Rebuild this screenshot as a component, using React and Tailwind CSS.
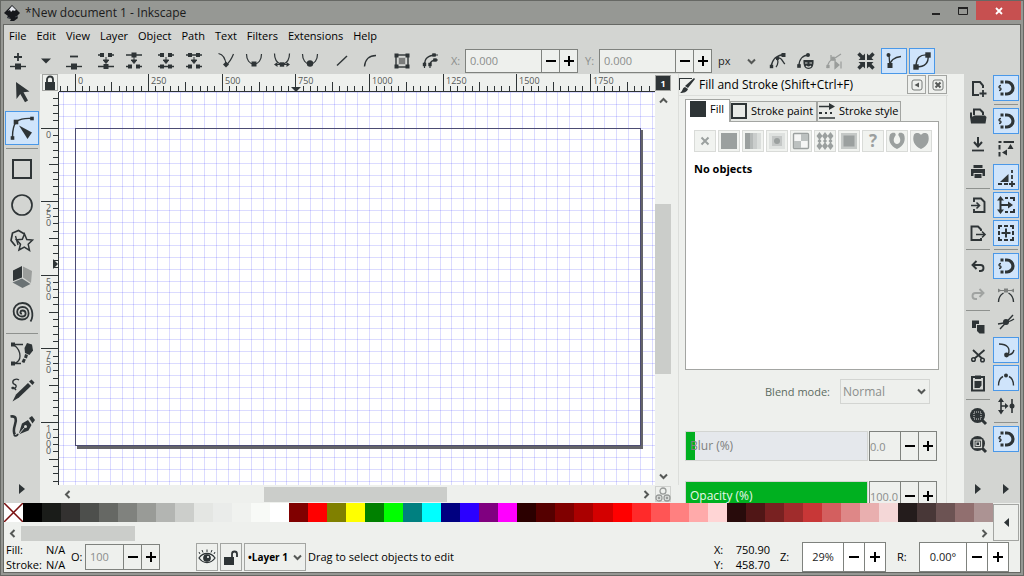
import React from "react";

const INK = "#2e3436";

function Icon({ size = 24, children, className = "" }) {
  return (
    <svg
      width={size}
      height={size}
      viewBox={`0 0 ${size} ${size}`}
      fill="none"
      stroke={INK}
      strokeWidth="1.4"
      className={`shrink-0 ${className}`}
      aria-hidden="true"
    >
      {children}
    </svg>
  );
}

function Sq({ x, y, r = 2, fill = INK }) {
  return <rect x={x - r} y={y - r} width={r * 2} height={r * 2} fill={fill} stroke="none" />;
}

function Dot({ x, y, r = 3, fill = INK }) {
  return <circle cx={x} cy={y} r={r} fill={fill} stroke="none" />;
}

const DownArrow = <path d="M12 8v4M9.2 11h5.6L12 14.5z" fill={INK} strokeWidth="1" />;
const Bowl = <path d="M4.5 5c0 6 3 10 7.5 10s7.5-4 7.5-10" strokeWidth="1.2" />;

/* ---------- node toolbar icons ---------- */
const nodeGroups = [
  [
    ["Insert node", <><path d="M12 4v8M8 8h8" strokeWidth="1.8" /><path d="M4 17.5h16" /><Sq x={12} y={17.5} r={3} /></>],
    ["Insert node options", <path d="M7 9.500h10l-5 5z" fill={INK} stroke="none" />],
    ["Delete node", <><path d="M8 7.5h8" strokeWidth="1.8" /><path d="M4 17.5h16" /><Sq x={12} y={17.5} r={3} /></>],
  ],
  [
    ["Join nodes", <><path d="M4 6h5M15 6h5M4 17.5h16" /><Sq x={8} y={6} /><Sq x={16} y={6} />{DownArrow}<Sq x={12} y={17.5} r={2.5} /></>],
    ["Break path", <><path d="M4 6h16M4 17.5h5M15 17.5h5" /><Sq x={12} y={6} r={2.5} />{DownArrow}<Sq x={8} y={17.5} /><Sq x={16} y={17.5} /></>],
  ],
  [
    ["Join with segment", <><path d="M4 6h5M15 6h5M4 17.5h16" /><Sq x={8} y={6} /><Sq x={16} y={6} />{DownArrow}<Sq x={8} y={17.5} /><Sq x={16} y={17.5} /></>],
    ["Delete segment", <><path d="M4 6h16M4 17.5h5M15 17.5h5" /><Sq x={8} y={6} /><Sq x={16} y={6} />{DownArrow}<Sq x={8} y={17.5} /><Sq x={16} y={17.5} /></>],
  ],
  [
    ["Corner node", <><path d="M4.5 4.5c5 1 7 5 7.500 11.500 3-2 5.500-6 7.500-11" strokeWidth="1.2" /><path d="M12 12.500l3 3-3 3-3-3z" fill={INK} stroke="none" /></>],
    ["Smooth node", <>{Bowl}<Sq x={12} y={15} r={2.5} /></>],
    ["Symmetric node", <><path d="M4.5 4.5c0 5 2 9 6 10.500M19.5 4.5c0 5-2 9-6 10.500" strokeWidth="1.2" /><Sq x={12} y={15.5} r={2.2} /><path d="M4 15.500l3.500-2.500v5zM20 15.500l-3.500-2.500v5z" fill={INK} stroke="none" /><path d="M5 15.500h14" strokeWidth="1" /></>],
    ["Auto-smooth node", <>{Bowl}<Dot x={12} y={14.5} r={3.2} /></>],
  ],
  [
    ["Line segment", <path d="M7 16.500L17 7" />],
    ["Curve segment", <path d="M6.500 17.500C7 11 11 6.500 18 6.500" />],
  ],
  [
    ["Object to path", <><rect x="6" y="6" width="12" height="12" /><Sq x={6.5} y={6.5} /><Sq x={17.5} y={6.5} /><Sq x={6.5} y={17.5} /><Sq x={17.5} y={17.5} /><Sq x={12} y={12} r={3.2} fill="#7b7d7c" /></>],
    ["Stroke to path", <><path d="M7 16c-1-6 3-10 11-10M12 16c0-3 2-5 7-5" /><Sq x={16} y={6} r={1.7} /><Sq x={17} y={11} r={1.7} /><Sq x={6.5} y={15.5} r={1.7} /><Sq x={12} y={15.5} r={1.7} /><path d="M6.500 13v6M12 14v5M14 6h6M15 11h5" strokeWidth="1.2" /></>],
  ],
];

const pathEffectIcons = [
  ["Edit path effect", <><path d="M5 18C6 11 10 6 19 5.500M12 9c4-1 5 5 7 6M10 10c3 0 2 6 0 8" strokeWidth="1.3" /><Sq x={17.5} y={6} r={2} /><Dot x={11.5} y={9.5} r={1.8} /><Sq x={5.500} y={17.5} r={1.7} /></>],
  ["Edit mask", <><path d="M5 17C5 10 9 6 15 6" /><Sq x={5} y={17} r={1.8} /><Dot x={14} y={6} r={2} /><path d="M9.500 11h10c.5 5-1 9-5 9s-5.500-4-5-9z" fill={INK} stroke="none" /><path d="M11 14h2.500M15.500 14H18M12 17c1.500 1.500 3.500 1.500 5 0" stroke="#d3d5d2" strokeWidth="1.2" /></>],
];

const disabledEffect = (
  <g stroke="#9a9d9b">
    <path d="M5 19c1-5 3-8 6-9M10 11l9-6M9 6v5h5" strokeWidth="1.3" />
    <Sq x={6} y={17.5} r={1.6} fill="#9a9d9b" />
    <Sq x={11} y={9.5} r={1.8} fill="#9a9d9b" />
    <path d="M13 12.500v7l4-3.500zM19 12.500v7" fill="#9a9d9b" strokeWidth="1.2" />
  </g>
);

const transformHandles = (
  <>
    <path d="M4.500 4.500l4 4M19.500 4.500l-4 4M4.500 19.500l4-4M19.500 19.500l-4-4" strokeWidth="3.4" />
    <path d="M11 11V4.500L4.500 11zM13 11V4.500l6.500 6.500zM11 13v6.500L4.500 13zM13 13v6.500l6.500-6.500z" fill={INK} stroke="none" />
  </>
);

const handlesIcon = (
  <><path d="M8 17c0-5 4-9 11-9.500M7 6l1 12" strokeWidth="1.3" /><Sq x={8} y={16.5} r={2.5} /><Dot x={6.5} y={6} r={2} /></>
);
const outlineIcon = (
  <><path d="M6 18C6 9 10 5 18 6c1 8-3 12-12 12z" /><Sq x={6} y={18} r={2.7} /><Sq x={18} y={6} r={2.7} /></>
);

/* ---------- toolbox ---------- */
const tools = [
  ["Selector", <path d="M12 8l13.500 9.500-6 .7 4.500 8.300-3 1.800-4.700-8.200L12.500 25z" fill={INK} stroke="none" />],
  ["Node tool", <><path d="M8.500 27c0-8 1-12 4-15.500C16 9 20 8 28 8.500" /><Sq x={12} y={12} r={2.3} /><Sq x={28} y={8.5} r={1.8} /><Sq x={8.5} y={28} r={1.8} /><path d="M15 15.500l13 7-4.500 6.500z" fill={INK} stroke="none" /></>],
  "sep",
  ["Rectangle", <rect x="9" y="9" width="18" height="18" strokeWidth="2" />],
  ["Ellipse", <circle cx="18" cy="18" r="10" strokeWidth="1.7" />],
  ["Star", <><path d="M11.500 23L7 17.500 8.500 10l6-2.500 6 3.500" strokeWidth="1.7" /><path d="M14 22l-2.500-9" strokeWidth="1.3" /><path d="M20.500 11l2.300 5.500 5.700.5-4.300 4.300 1.300 6-5.200-3.300-5.300 3 1.500-5.700-4-4.500 5.800-.5z" strokeWidth="1.5" fill="#d3d5d2" /></>],
  ["3D box", <g stroke="none"><path d="M9 11.500L18 7v11.500L9 22z" fill={INK} /><path d="M19 7.500l9 4.500-1 12-8-5.500z" fill="#9b9e9c" /><path d="M8.500 23.500l9.500-4 8.500 5.500-8 4z" fill="#6a7274" /></g>],
  ["Spiral", <path d="M18 18.500c-2.500.5-2-3 .5-3 4 0 4.500 6-.5 6-6.500 0-6.500-9.500.5-9.500 8 0 8.500 12.500-.5 12.500C6.500 24.500 7 8 18.500 8 29 8 30 21 26.500 26.500" strokeWidth="1.8" />],
  "sep",
  ["Bezier pen", <><path d="M9 8.500h10M9 27.500h8M10 9c4 3 6 7 6 11s-2 6-5 7" strokeWidth="1.3" /><Sq x={9} y={8.5} /><Sq x={9} y={27.5} /><path d="M23 7l5 1.500 1 6-3.500 4.500-4.500-2-.5-5z" fill={INK} stroke="none" /><path d="M22.500 18.500l-1 3.500M20.500 23l-1.500 3.500" strokeWidth="3" /></>],
  ["Pencil", <><path d="M15 8c-3-2-7 0-6 3 .5 2 4 1 3 4-1 2-4 2-4 1s2-1 4 2" strokeWidth="1.4" /><path d="M24 11l3 3-12 11.500-6.500 4 3.500-7z" fill={INK} stroke="none" /><path d="M25 9.500l2.500-2 3 3-2 2.500z" fill={INK} stroke="none" /></>],
  ["Calligraphy", <><path d="M6.500 8.500c6-1 6 3 4.500 8s-2 8 0 10" strokeWidth="2.6" /><path d="M10 27c1 1.500 3 1 4-1" strokeWidth="1.8" /><path d="M14.500 26.500l3.500-11 6-3.500 3.500 5-3 5.500z" fill={INK} stroke="none" /><path d="M15 26l5.500-6.500" stroke="#d3d5d2" strokeWidth="1" /><circle cx="21.5" cy="18.5" r="1.5" fill="#d3d5d2" stroke="none" /><path d="M25 10l3-2 3 4-2.500 3.500z" fill={INK} stroke="none" /></>],
];

/* ---------- command bar ---------- */
const commands = [
  ["New", <><path d="M17 12V9.500L14 6H7v13h6" strokeWidth="2" /><path d="M17 14v7M13.500 17.500h7" strokeWidth="1.8" /></>],
  ["Open", <><path d="M8 11V5.500h6l3 3V11" strokeWidth="2" /><path d="M5 8.500v5" strokeWidth="2" /><path d="M4 12.500h3l1-1h11l1.500 1.500-1 6.500H5z" fill={INK} stroke="none" /></>],
  ["Save", <><path d="M12 5v9" strokeWidth="2" /><path d="M8 10l4 4.500 4-4.500" strokeWidth="2" /><path d="M6 18.500h12" strokeWidth="1.8" /></>],
  ["Print", <g fill={INK} stroke="none"><path d="M7.500 5h9v3h-9zM5 9h14v7h-2.500v-3h-9v3H5z" /><path d="M8.500 14h7v4h-7z" /></g>],
  "sep",
  ["Import", <><path d="M8 9V5.500h7L18.500 9v10H8v-3" strokeWidth="1.9" /><path d="M5 12.500h8M10.500 9.500l3 3-3 3" strokeWidth="1.6" /></>],
  ["Export", <><path d="M15 10V8.500L12 5.500H5.500V19H15v-2" strokeWidth="1.9" /><path d="M10 13.500h9M16 10.500l3 3-3 3" strokeWidth="1.6" /></>],
  "sep",
  ["Undo", <><path d="M7.500 11h7c4 0 4 6 0 6H13" strokeWidth="1.9" /><path d="M10.500 7L6.500 11l4 4" strokeWidth="1.9" /></>],
  ["Redo", <g stroke="#a0a3a1"><path d="M16.500 11h-7c-4 0-4 6 0 6H11" strokeWidth="1.9" /><path d="M13.500 7l4 4-4 4" strokeWidth="1.9" /></g>],
  "sep",
  ["Duplicate", <g fill={INK} stroke="none"><path d="M6 5.500h7V9h-3v4H6z" /><path d="M11 10h7.500v8.500h-5L11 16z" /></g>],
  ["Cut", <><path d="M7 7l9 8.500M18.500 7l-10 8.500" strokeWidth="1.8" /><circle cx="7.5" cy="16.5" r="1.8" strokeWidth="1.5" /><circle cx="16.5" cy="17" r="1.8" strokeWidth="1.5" /></>],
  ["Paste", <><rect x="6" y="6" width="12" height="13.5" strokeWidth="2" /><path d="M9 4.500h6V8H9zM8.500 10h7v4.500l-2 2.500h-5z" fill={INK} stroke="none" /></>],
  "sep",
  ["Zoom selection", <><circle cx="11.5" cy="11.5" r="7.5" fill={INK} stroke="none" /><path d="M16 16l4 4" strokeWidth="3" /><rect x="8" y="8" width="7" height="7" stroke="#d3d5d2" strokeWidth="1" strokeDasharray="1 1" /></>],
  ["Zoom drawing", <><circle cx="11.5" cy="11.5" r="7.5" fill={INK} stroke="none" /><path d="M16 16l4 4" strokeWidth="3" /><rect x="8" y="8" width="7.5" height="7.5" stroke="#d3d5d2" strokeWidth="1.3" /><rect x="10" y="10" width="3.5" height="3.5" stroke="#d3d5d2" strokeWidth="1" /></>],
];

/* ---------- snap bar ---------- */
const Magnet = (
  <>
    <path d="M11 6h2a6 6 0 0 1 0 12h-2" strokeWidth="3.2" />
    <Sq x={8} y={6} r={1.5} />
    <Sq x={8} y={18} r={1.5} />
    <path d="M7 9.500c-2.500 0-2.500 2.500-1 2.500s1.500 2.500-1 2.500" strokeWidth="1.3" />
  </>
);
const snaps = [
  ["Enable snapping", Magnet, true],
  "sep",
  ["Snap bounding boxes", Magnet, true],
  ["Snap bounding box edges", <><path d="M4.500 5h3M9.500 5H20M5.500 8v4.500M5.500 15v4.500" strokeWidth="2" /><path d="M16.500 7l3 5h-6zM8 15.500l5-3v6z" fill={INK} stroke="none" /></>, false],
  ["Snap bounding box corners", <><path d="M14.500 6v11H6l8.500-8z" fill={INK} stroke="none" /><path d="M18 5v3M18 10v4M4 19h4M10 19h4M15 19h6M18 16v6" strokeWidth="1.8" /></>, true],
  ["Snap edge midpoints", <><path d="M6.500 5v14M6.500 12h9" strokeWidth="2" /><path d="M6.500 3L10 7.500H3zM6.500 21l3.500-4.500H3zM19 12l-5-3.500v7z" fill={INK} stroke="none" /><path d="M11 5h3M16 5h4v3M20 16v3h-4M14 19h-3" strokeWidth="2" /></>, true],
  ["Snap bounding box centers", <><path d="M12 7.500v9M7.500 12h9" strokeWidth="2" /><path d="M5 8V5h3M10 5h4M16 5h3v3M19 10v4M19 16v3h-3M14 19h-4M8 19H5v-3M5 14v-4" strokeWidth="2" /></>, true],
  "sep",
  ["Snap nodes", Magnet, true],
  ["Snap to paths", <><path d="M4.500 20c0-5 1.500-7 5-9M19.500 20c0-5-1.500-7-5-9" /><g stroke="#7d807e" fill="#7d807e"><path d="M5 8.500h14" strokeWidth="1" /><rect x="10" y="6.500" width="4" height="4" stroke="none" /><path d="M4 6.500l3.500 2-3.500 2zM20 6.500l-3.500 2 3.500 2z" stroke="none" /></g></>, false],
  ["Snap path intersections", <><path d="M4 14c5-1 10-1 16-5M6 19L19 5" /><Dot x={12} y={12} /></>, false],
  ["Snap cusp nodes", <><path d="M5 6c8 0 12 4 9 11M13 17c4 0 6-1 7-5" strokeWidth="1.4" /><Dot x={12.5} y={17} r={2.4} /></>, true],
  ["Snap smooth nodes", <><path d="M4.500 19.500c0-5 1.500-7.500 4.500-9M19.500 19.500c0-5-1.500-7.500-4.500-9" /><Dot x={12} y={9.5} r={2} /></>, true],
  ["Snap line midpoints", <><path d="M7 6v12M7 12h6M18 5v14" strokeWidth="1.6" /><path d="M7 3.500l3 4.500H4zM7 20.500l3-4.500H4zM14.500 12L11 9v6z" fill={INK} stroke="none" /><Dot x={18} y={12} r={2.5} /></>, false],
  "sep",
  ["Snap others", Magnet, true],
];

const swatches = [
  "bg-[#000000]", "bg-[#1a1c19]", "bg-[#333130]", "bg-[#4d4f4c]", "bg-[#666864]", "bg-[#80827e]", "bg-[#999b97]",
  "bg-[#b3b5b2]", "bg-[#cccecb]", "bg-[#e4e6e3]", "bg-[#eaecea]", "bg-[#f0f2ef]", "bg-[#f8faf7]", "bg-[#ffffff]",
  "bg-[#800000]", "bg-[#ff0000]", "bg-[#808000]", "bg-[#ffff00]", "bg-[#008000]", "bg-[#00ff00]", "bg-[#008080]",
  "bg-[#00ffff]", "bg-[#000080]", "bg-[#2b00ff]", "bg-[#800080]", "bg-[#ff00ff]", "bg-[#2b0000]", "bg-[#550000]",
  "bg-[#800000]", "bg-[#aa0000]", "bg-[#d40000]", "bg-[#ff0000]", "bg-[#ff2a2a]", "bg-[#ff5555]", "bg-[#ff8080]",
  "bg-[#ffaaaa]", "bg-[#ffd5d5]", "bg-[#280b0b]", "bg-[#501616]", "bg-[#782121]", "bg-[#a02c2c]", "bg-[#c83737]",
  "bg-[#d35f5f]", "bg-[#de8787]", "bg-[#e9afaf]", "bg-[#f4d7d7]", "bg-[#241c1c]", "bg-[#483737]", "bg-[#6c5353]",
  "bg-[#916f6f]", "bg-[#ac9393]",
];

/* ---------- small controls ---------- */
function Chevron({ dir = "down", size = 9 }) {
  const d = { down: "M1 2.500l3.500 3.500L8 2.500", up: "M1 6.500L4.500 3 8 6.500", left: "M6.500 1L3 4.500 6.500 8", right: "M2.500 1L6 4.500 2.500 8" }[dir];
  return (
    <svg width={size} height={size} viewBox="0 0 9 9" fill="none" stroke="#555856" strokeWidth="2" className="shrink-0" aria-hidden="true">
      <path d={d} />
    </svg>
  );
}

function Spin({ label, value, entry, button = "w-[18px]", height = "h-6", tone = "bg-[#eef0ed] text-[#8b8e8c]" }) {
  return (
    <div className={`flex shrink-0 border border-[#7f827e] ${height} ${tone}`}>
      <input aria-label={label} defaultValue={value} className={`h-full min-w-0 bg-transparent outline-none ${entry}`} />
      <button aria-label={`Decrease ${label}`} className={`flex items-center justify-center border-l border-[#7f827e] ${button}`}>
        <svg width="12" height="12" viewBox="0 0 12 12" aria-hidden="true"><path d="M1 6h10" stroke="#000" strokeWidth="2" /></svg>
      </button>
      <button aria-label={`Increase ${label}`} className={`flex items-center justify-center border-l border-[#7f827e] ${button}`}>
        <svg width="12" height="12" viewBox="0 0 12 12" aria-hidden="true"><path d="M1 6h10M6 1v10" stroke="#000" strokeWidth="2" /></svg>
      </button>
    </div>
  );
}

function ToolButton({ label, active, children, size = "size-7", inner = "size-[26px]" }) {
  return (
    <button aria-label={label} title={label} className={`flex shrink-0 items-center justify-center ${size}`}>
      <span className={`flex items-center justify-center ${inner} ${active ? "border border-[#4a98e8] bg-[#cfe4fb]" : ""}`}>{children}</span>
    </button>
  );
}

function Separator() {
  return <div className="mx-0.5 my-0.5 h-px shrink-0 self-stretch bg-[#8e918e]" />;
}

function MoreButton() {
  return (
    <button aria-label="More" className="mt-auto flex h-7 items-center justify-center self-center">
      <svg width="6" height="10" viewBox="0 0 6 10" aria-hidden="true"><path d="M0 0l6 5-6 5z" fill={INK} /></svg>
    </button>
  );
}

/* ---------- drawing canvas ---------- */
const ZOOM = 0.2944;
const range = (from, to) => Array.from({ length: to - from + 1 }, (_, i) => i + from);

function HorizontalRuler() {
  const origin = 16;
  return (
    <svg className="block h-[18px] min-w-0 flex-1" aria-label="Horizontal ruler">
      {range(-2, 400).map((n) => {
        const x = Math.floor(origin + n * 25 * ZOOM) + 0.5;
        const h = n % 10 === 0 ? 17 : n % 5 === 0 ? 9 : 5;
        return <path key={n} d={`M${x} ${17 - h}V17`} stroke={INK} />;
      })}
      {range(0, 7).map((n) => (
        <text key={n} x={Math.floor(origin + n * 250 * ZOOM) + 3} y="10" fontSize="9" fill="#555856">{n * 250}</text>
      ))}
      <path d="M0 17.500H4000" stroke={INK} />
      <path d="M232 13h10l-5 5z" fill={INK} />
    </svg>
  );
}

function VerticalRuler() {
  const origin = 36;
  return (
    <svg className="block w-[19px] shrink-0" aria-label="Vertical ruler">
      {range(-4, 300).map((n) => {
        const y = Math.floor(origin + n * 25 * ZOOM) + 0.5;
        const w = n % 10 === 0 ? 17 : n % 5 === 0 ? 9 : 5;
        return <path key={n} d={`M${18 - w} ${y}H18`} stroke={INK} />;
      })}
      {range(0, 4).map((n) =>
        String(n * 250).split("").map((c, i) => (
          <text key={`${n}-${i}`} x="6" y={Math.floor(origin + n * 250 * ZOOM) + 10 + Math.floor(i * 7.6)} fontSize="9" fill="#555856">{c}</text>
        ))
      )}
      <path d="M18.500 0V3000" stroke={INK} />
      <path d="M13 167v10l5-5z" fill={INK} />
    </svg>
  );
}

function Canvas() {
  return (
    <svg className="block h-full min-w-0 flex-1 bg-white" role="img" aria-label="Drawing canvas">
      {range(-1, 250).map((n) => (
        <path key={`v${n}`} d={`M${Math.floor(16 + n * 40 * ZOOM) + 0.5} 0V3000`} stroke="#0000ff" strokeOpacity="0.14" />
      ))}
      {range(-3, 200).map((n) => (
        <path key={`h${n}`} d={`M0 ${Math.floor(36 + n * 40 * ZOOM) + 0.5}H4000`} stroke="#0000ff" strokeOpacity="0.14" />
      ))}
      <path d="M581 38h3v319H18v-4h563z" fill="#646469" />
      <rect x="16.5" y="36.5" width="565" height="317" fill="none" stroke="#4c4c73" />
    </svg>
  );
}

function Workspace() {
  return (
    <div className="flex min-w-0 flex-1 flex-col bg-[#eef0ed]">
      <div className="flex min-h-0 flex-1">
        <div className="flex min-w-0 flex-1 flex-col">
          <div className="flex h-[18px] shrink-0">
            <div className="flex w-[19px] shrink-0 justify-center">
              <button aria-label="Lock guides" className="flex h-[17px] w-4 items-center justify-center border border-[#a3a5a2]">
                <svg width="12" height="15" viewBox="0 0 12 15" aria-hidden="true">
                  <path d="M3 8V4.500a3 3 0 0 1 6 0V8" fill="none" stroke={INK} strokeWidth="1.8" />
                  <path d="M1 7h10v8H1z" fill={INK} />
                </svg>
              </button>
            </div>
            <HorizontalRuler />
          </div>
          <div className="flex min-h-0 flex-1">
            <VerticalRuler />
            <Canvas />
          </div>
        </div>
        <div className="flex w-4 shrink-0 flex-col items-center">
          <button aria-label="Color management" className="mt-px flex size-4 shrink-0 items-center justify-center border border-[#a3a5a2] bg-[#2e3436] text-[9px] leading-none font-bold text-white">1</button>
          <button aria-label="Scroll up" className="flex h-[19px] shrink-0 items-center"><Chevron dir="up" /></button>
          <div className="flex w-full flex-1 flex-col pt-[94px]">
            <div className="h-[170px] bg-[#cbcdca]" />
          </div>
          <button aria-label="Scroll down" className="flex h-[18px] shrink-0 items-center"><Chevron /></button>
        </div>
        <div className="w-2 shrink-0 border-r border-[#dcdedb]" />
      </div>
      <div className="flex h-[18px] shrink-0 items-center">
        <button aria-label="Scroll left" className="ml-5 flex w-3.5 shrink-0 justify-center"><Chevron dir="left" /></button>
        <div className="flex h-[15px] min-w-0 flex-1 pl-0.5">
          <div className="w-1/3" />
          <div className="h-full w-[183px] bg-[#cbcdca]" />
        </div>
        <button aria-label="Scroll right" className="flex w-3.5 shrink-0 justify-center"><Chevron dir="right" /></button>
        <button aria-label="Sticky zoom" className="mr-2 ml-0.5 flex size-4 shrink-0 items-center justify-center border border-[#d0d2cf]">
          <svg width="16" height="15" viewBox="0 0 16 15" fill="none" stroke="#989b99" strokeWidth="1.3" className="shrink-0" aria-hidden="true">
            <circle cx="8" cy="4" r="3" /><circle cx="4" cy="11" r="3" /><circle cx="12" cy="11" r="3" />
            <circle cx="4" cy="11" r=".8" /><circle cx="12" cy="11" r=".8" />
          </svg>
        </button>
      </div>
    </div>
  );
}

/* ---------- fill and stroke dialog ---------- */
const G = "#9ba09f";
const paints = [
  ["No paint", <path d="M5.500 5.500l7 7M12.500 5.500l-7 7" stroke={G} strokeWidth="2" />],
  ["Flat color", <rect x="1" y="1" width="16" height="16" fill={G} stroke="none" />],
  ["Linear gradient", <g stroke="none" fill={G}><path d="M1 1h5v16H1z" /><path d="M6 1h3v16H6z" opacity=".7" /><path d="M9 1h4v16H9z" opacity=".45" /><path d="M13 1h4v16h-4z" opacity=".25" /></g>],
  ["Radial gradient", <g stroke="none" fill={G}><path d="M1 1h16v16H1z" opacity=".2" /><path d="M4 4h10v10H4z" opacity=".4" /><circle cx="9" cy="9" r="3" /></g>],
  ["Mesh gradient", <g><rect x="1.5" y="1.5" width="15" height="15" rx="1" stroke={G} fill="#f5f6f5" /><path d="M9 2h7v7H9zM2 9h7v7H2z" fill="#bcc1c0" stroke="none" /></g>],
  ["Pattern", <g stroke="none" fill={G}>{[3.5, 9, 14.5].map((x) => <path key={x} d={`M${x} 0l3 4-3 4-3-4zM${x} 10l3 4-3 4-3-4zM${x - 2} 9l2-2.500 2 2.500-2 2.500z`} />)}</g>],
  ["Swatch", <g stroke="none"><rect x="1" y="1" width="16" height="16" fill="#c5c9c7" /><rect x="3.5" y="3.5" width="11" height="11" fill={G} /></g>],
  ["Unset paint", <text x="9" y="15" textAnchor="middle" fontSize="17" fontWeight="700" fill={G} stroke="none">?</text>],
  ["Fill rule even-odd", <path d="M7 1C5 .5 3 1 2 2.500 0 8 2 14 9 17c7-3 9-9 7-14.500C15 1 13 .5 11 1c-.5 1-1 1.500-.5 2.500 3 4 2 8-1.500 8.500-3.500-.5-4.500-4.500-1.500-8.500C8 2.500 7.500 2 7 1z" fill={G} stroke="none" />],
  ["Fill rule nonzero", <path d="M9 3c2-2.500 5-2.500 7-.5 2 5.500 0 11.500-7 14.500C2 14 0 8 2 2.500 4 .5 7 .5 9 3z" fill={G} stroke="none" />],
];

function Meter({ label, value, fill, text, track }) {
  return (
    <div className="flex h-[30px] shrink-0 gap-px">
      <div className={`relative flex min-w-0 flex-1 items-center border border-[#d3d5d2] ${track}`}>
        <div className={`absolute inset-y-0 left-0 bg-[#00b020] ${fill}`} />
        <span className={`relative pl-1 text-[12px] ${text}`}>{label}</span>
        <input type="range" aria-label={label} defaultValue={value} className="absolute inset-0 size-full opacity-0" />
      </div>
      <Spin label={`${label} value`} value={value} entry="w-[30px]" height="h-[30px]" />
    </div>
  );
}

function FillStrokePanel() {
  return (
    <section className="flex w-[285px] shrink-0 bg-[#eef0ed]">
      <div className="flex min-w-0 flex-1 flex-col overflow-hidden">
        <header className="flex h-[22px] shrink-0 items-center border-b border-[#dcdedb]">
          <svg width="16" height="18" viewBox="0 0 16 18" aria-hidden="true">
            <path d="M0 2.500h13M.5 2.500V14" stroke={INK} fill="none" />
            <path d="M15 2l1 1-7 9-3-2zM6 11l3 2c-1 3-4 4-8 4 3-2 2-5 5-6z" fill={INK} />
          </svg>
          <h2 className="ml-1 flex-1 text-[12px] text-black">Fill and Stroke (Shift+Ctrl+F)</h2>
          <button aria-label="Iconify dialog" className="mr-0.5 flex size-[19px] items-center justify-center border border-[#a3a5a2]">
            <svg width="12" height="12" viewBox="0 0 12 12" fill="none" stroke="#777a78" aria-hidden="true"><rect x="1" y="1" width="10" height="10" rx="2" /><path d="M3.500 6L8 3.500v5z" fill="#555856" stroke="none" /></svg>
          </button>
          <button aria-label="Close dialog" className="mr-px flex size-[19px] items-center justify-center border border-[#a3a5a2]">
            <svg width="12" height="12" viewBox="0 0 12 12" fill="none" stroke="#777a78" aria-hidden="true"><rect x="1" y="1" width="10" height="10" rx="2" /><path d="M3.500 3.500l5 5M8.500 3.500l-5 5" stroke="#555856" strokeWidth="2" /></svg>
          </button>
        </header>
        <div className="mr-px flex flex-1 flex-col border-r border-[#dcdedb] pt-[3px] pr-[7px] pl-1.5">
          <div role="tablist" className="flex h-[22px] items-end whitespace-nowrap text-black">
            <button role="tab" aria-selected="true" className="relative z-10 -mb-px flex h-[23px] w-[45px] items-center gap-1 border border-b-0 border-[#a3a5a2] bg-white pb-1 pl-1">
              <span className="size-4 shrink-0 bg-[#2e3436]" />Fill
            </button>
            <button role="tab" aria-selected="false" className="flex h-5 w-[87px] items-center gap-1 border border-b-0 border-[#a3a5a2] bg-[#e8eae7] pb-0.5">
              <span className="size-4 shrink-0 border-2 border-[#2e3436]" />Stroke paint
            </button>
            <button role="tab" aria-selected="false" className="flex h-5 w-[84px] items-center gap-1 border border-b-0 border-[#a3a5a2] bg-[#e8eae7] pb-0.5 pl-px">
              <svg width="16" height="16" viewBox="0 0 16 16" className="shrink-0" stroke={INK} fill="none" aria-hidden="true">
                <path d="M0 3.500h12M0 15h16" strokeWidth="1.5" /><path d="M10 0l6 3.500L10 7z" fill={INK} stroke="none" /><path d="M0 10h3M6 10h2M11 10h2" strokeWidth="2" />
              </svg>
              Stroke style
            </button>
          </div>
          <div className="flex h-[249px] shrink-0 flex-col border border-[#a3a5a2] bg-white pt-2 pl-2">
            <div className="flex gap-0.5">
              {paints.map(([label, art]) => (
                <button key={label} aria-label={label} className="flex size-[22px] shrink-0 items-center justify-center border border-[#d9dbd8] bg-[#f1f3f0]">
                  <Icon size={18}>{art}</Icon>
                </button>
              ))}
            </div>
            <p className="mt-[9px] font-bold text-black">No objects</p>
          </div>
          <div className="mt-[9px] flex h-[25px] shrink-0 items-center justify-end gap-2.5 pr-[9px]">
            <label htmlFor="blend" className="text-[#5c6b5f]">Blend mode:</label>
            <div className="relative h-full">
              <select id="blend" defaultValue="Normal" className="h-full w-[90px] appearance-none border border-[#d3d5d2] bg-[#eef0ed] pl-0.5 text-[12px] text-[#8b8e8c]">
                <option>Normal</option>
              </select>
              <span className="pointer-events-none absolute top-2 right-1"><Chevron /></span>
            </div>
          </div>
          <div className="mt-[27px] flex flex-col gap-5 pr-0.5">
            <Meter label="Blur (%)" value="0.0" fill="w-[9px]" text="text-[#7d807e]" track="bg-[#e5e8ec]" />
            <Meter label="Opacity (%)" value="100.0" fill="w-full" text="text-[#e8f8ea]" track="bg-[#00b020]" />
          </div>
        </div>
      </div>
      <div className="w-4 shrink-0" />
    </section>
  );
}

function TopBar() {
  return (
    <div className="flex h-[27px] shrink-0 items-center">
      <div className="flex gap-1">
        {nodeGroups.map((group, i) => (
          <div key={i} className="flex">
            {group.map(([label, art]) => <ToolButton key={label} label={label}><Icon>{art}</Icon></ToolButton>)}
          </div>
        ))}
      </div>
      <label className="ml-[7px] flex items-center text-[#8b8e8c]"><span className="w-3.5">X:</span><Spin label="X" value="0.000" entry="w-[75px] pl-1" /></label>
      <label className="ml-[7px] flex items-center text-[#8b8e8c]"><span className="w-3.5">Y:</span><Spin label="Y" value="0.000" entry="w-[75px] pl-1" /></label>
      <div className="relative ml-1.5">
        <select aria-label="Units" defaultValue="px" className="h-6 w-[42px] appearance-none bg-transparent text-[#222]"><option>px</option></select>
        <span className="pointer-events-none absolute top-2 right-1"><Chevron /></span>
      </div>
      <div className="ml-1 flex">
        {pathEffectIcons.map(([label, art]) => <ToolButton key={label} label={label}><Icon>{art}</Icon></ToolButton>)}
        <ToolButton label="Next path effect parameter"><Icon>{disabledEffect}</Icon></ToolButton>
      </div>
      <div className="ml-1 flex">
        <ToolButton label="Show transform handles"><Icon>{transformHandles}</Icon></ToolButton>
        <ToolButton label="Show Bezier handles" active><Icon>{handlesIcon}</Icon></ToolButton>
        <ToolButton label="Show path outline" active><Icon>{outlineIcon}</Icon></ToolButton>
      </div>
    </div>
  );
}

function StatusBar() {
  const white = "bg-white text-[#222]";
  return (
    <footer className="flex h-[31px] shrink-0 items-center overflow-hidden pl-0.5 text-black">
      <div className="grid w-[63px] grid-cols-[40px_auto] leading-[15px]">
        <span>Fill:</span><span>N/A</span>
        <span>Stroke:</span><span>N/A</span>
      </div>
      <label className="ml-0.5 flex items-center"><span className="w-3.5">O:</span><Spin label="Opacity" value="100" entry="w-[37px] pl-1" height="h-[26px]" /></label>
      <div className="ml-9 flex gap-0.5">
        <button aria-label="Toggle layer visibility" className="flex h-7 w-[22px] items-center justify-center border border-[#a3a5a2]">
          <svg width="18" height="16" viewBox="0 0 18 16" fill="none" stroke={INK} strokeWidth="1.3" aria-hidden="true">
            <path d="M1 9c4-6 12-6 16 0-4 6-12 6-16 0z" /><circle cx="9" cy="9" r="3.200" fill={INK} /><circle cx="10" cy="8" r="1" fill="#fff" stroke="none" />
            <path d="M2 5L1 3M5 3.500L4 1M9 3V.5M13 3.500L14 1M16 5l1-2" strokeWidth="1" />
          </svg>
        </button>
        <button aria-label="Toggle layer lock" className="flex h-7 w-[22px] items-center justify-center border border-[#a3a5a2]">
          <svg width="16" height="16" viewBox="0 0 16 16" aria-hidden="true">
            <path d="M9 9V5a2.500 2.500 0 0 1 5 0v3" fill="none" stroke={INK} strokeWidth="1.8" /><path d="M1 8h10v8H1z" fill={INK} />
          </svg>
        </button>
        <div className="relative">
          <select aria-label="Current layer" defaultValue="•Layer 1" className="h-7 w-[62px] appearance-none border border-[#a3a5a2] pl-[3px] text-[10px] font-bold"><option>•Layer 1</option></select>
          <span className="pointer-events-none absolute top-2.5 right-1"><Chevron /></span>
        </div>
      </div>
      <span className="ml-0.5 flex-1 whitespace-nowrap">Drag to select objects to edit</span>
      <div className="grid grid-cols-[20px_36px] leading-[15px]">
        <span>X:</span><span className="text-right">750.90</span>
        <span>Y:</span><span className="text-right">458.70</span>
      </div>
      <label className="ml-2.5 flex items-center"><span className="w-[22px]">Z:</span><Spin label="Zoom" value="29%" entry="w-10 text-center" button="w-[21px]" height="h-[30px]" tone={white} /></label>
      <label className="mr-[11px] ml-[11px] flex items-center"><span className="w-[22px]">R:</span><Spin label="Rotation" value="0.00°" entry="w-[46px] text-center" button="w-[21px]" height="h-[30px]" tone={white} /></label>
    </footer>
  );
}

export default function App() {
  return (
    <div className="flex h-screen w-full flex-col overflow-hidden border border-[#666864] bg-[#969894] px-0.5 pb-0.5 font-['Open_Sans','Noto_Sans',sans-serif] text-[11px] leading-4 text-[#1b1b1b]">
      <div className="flex h-[23px] shrink-0 items-center">
        <svg width="18" height="18" viewBox="0 0 18 18" className="shrink-0" aria-hidden="true">
          <path d="M9 1l8 8-3 3 1 2-4 3H7l1-2-4-1 1-2-4-3z" fill="#16181c" />
          <path d="M9 2l4 4-2 1-1-1-2 2-1-2-2 1z" fill="#e6e8ee" />
          <path d="M4 13l3 1M12 13l3-1" stroke="#3c4048" />
        </svg>
        <h1 className="ml-1 flex-1 text-[12px]">*New document 1 - Inkscape</h1>
        <div className="flex self-start">
          <button aria-label="Minimize" className="flex h-[19px] w-[27px] items-center justify-center"><svg width="10" height="10" viewBox="0 0 10 10" aria-hidden="true"><path d="M1 8h8" stroke="#222" strokeWidth="2" /></svg></button>
          <button aria-label="Maximize" className="flex h-[19px] w-[27px] items-center justify-center"><svg width="10" height="8" viewBox="0 0 10 8" aria-hidden="true"><path d="M.5 1v6.500h9V1" fill="none" stroke="#222" /><path d="M0 1h10" stroke="#222" strokeWidth="2" /></svg></button>
          <button aria-label="Close" className="flex h-[19px] w-[45px] items-center justify-center bg-[#c75050]"><svg width="8" height="8" viewBox="0 0 8 8" aria-hidden="true"><path d="M1 1l6 6M7 1L1 7" stroke="#fff" strokeWidth="1.8" /></svg></button>
        </div>
      </div>
      <div className="flex min-h-0 flex-1 flex-col border border-[#666864] bg-[#d3d5d2]">
        <nav className="flex h-[22px] shrink-0 items-center gap-2.5 pl-[5px] text-black">
          {["File", "Edit", "View", "Layer", "Object", "Path", "Text", "Filters", "Extensions", "Help"].map((m) => <button key={m}>{m}</button>)}
        </nav>
        <TopBar />
        <main className="flex min-h-0 flex-1 overflow-hidden">
          <div className="flex w-9 shrink-0 flex-col">
            {tools.map((t, i) => t === "sep" ? <Separator key={i} /> : (
              <ToolButton key={t[0]} label={t[0]} active={t[0] === "Node tool"} size="size-9" inner="size-[34px]"><Icon size={36}>{t[1]}</Icon></ToolButton>
            ))}
            <MoreButton />
          </div>
          <Workspace />
          <FillStrokePanel />
          <div className="flex w-7 shrink-0 flex-col">
            {commands.map((c, i) => c === "sep" ? <Separator key={i} /> : <ToolButton key={c[0]} label={c[0]}><Icon>{c[1]}</Icon></ToolButton>)}
            <MoreButton />
          </div>
          <div className="flex w-7 shrink-0 flex-col">
            {snaps.map((s, i) => s === "sep" ? <Separator key={i} /> : <ToolButton key={s[0]} label={s[0]} active={s[2]}><Icon>{s[1]}</Icon></ToolButton>)}
            <MoreButton />
          </div>
        </main>
        <div className="bg-[#eef0ed]">
          <div className="flex h-[38px]">
            <div className="flex min-w-0 flex-1 flex-col">
              <div className="flex h-[19px] shrink-0">
                <button aria-label="No color" className="h-full min-w-0 flex-1 bg-white">
                  <svg className="block size-full" viewBox="0 0 19 19" preserveAspectRatio="none" aria-hidden="true"><path d="M0 0l19 19M19 0L0 19" stroke="#7a1010" strokeWidth="1.5" /></svg>
                </button>
                {swatches.map((c, i) => <button key={i} aria-label={`Swatch ${i + 1}`} className={`h-full min-w-0 flex-1 ${c}`} />)}
              </div>
              <div className="flex flex-1 items-end">
                <button aria-label="Scroll palette left" className="flex h-[15px] w-[17px] items-center justify-center"><Chevron dir="left" /></button>
                <div className="h-[15px] w-[114px] bg-[#cbcdca]" />
                <button aria-label="Scroll palette right" className="ml-auto flex h-[15px] w-[17px] items-center justify-center"><Chevron dir="right" /></button>
              </div>
            </div>
            <button aria-label="Palette menu" className="mt-px mr-px flex w-[26px] shrink-0 items-center justify-center border border-[#a3a5a2]">
              <svg width="5" height="9" viewBox="0 0 5 9" aria-hidden="true"><path d="M5 0L0 4.500 5 9z" fill={INK} /></svg>
            </button>
          </div>
          <StatusBar />
        </div>
      </div>
    </div>
  );
}
